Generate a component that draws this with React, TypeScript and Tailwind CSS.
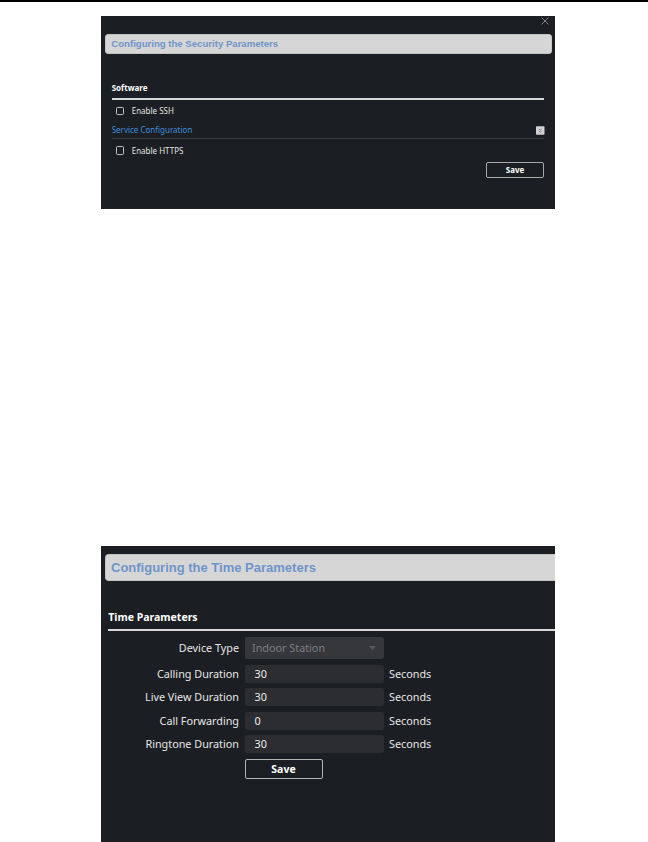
import React from "react";

const sans = { fontFamily: '"Noto Sans", "Open Sans", sans-serif' };

function CheckRow({ label }: { label: string }) {
  return (
    <div className="flex items-center h-[12px] pl-[4px] gap-[7.5px]">
      <span className="w-[8.5px] h-[8.5px] border border-[#c4c4c4] rounded-[1.5px] box-border" />
      <span className="text-[8px] leading-[12px] text-[#e4e4e4] font-['Noto_Sans',sans-serif]">{label}</span>
    </div>
  );
}

function SecurityPanel() {
  return (
    <div className="ml-[101px] mt-[14px] w-[454px] h-[193px] bg-[#1b1e22] flex flex-col">
      <div className="h-[18px] flex justify-end items-start pt-[1.3px] pr-[6.5px]">
        <svg width="8" height="8" viewBox="0 0 8 8">
          <path d="M0.5 0.5 L7.5 7.5 M7.5 0.5 L0.5 7.5" stroke="#8a8c90" strokeWidth="0.9" fill="none" />
        </svg>
      </div>
      <div className="ml-[4.3px] mr-[3.3px] h-[20px] rounded-[3px] bg-[#d6d6d6] border border-[#c4c4c4] flex items-center pl-[5px]">
        <span className="font-['Liberation_Sans',Arial,sans-serif] font-bold text-[9.6px] text-[#6f94c9] leading-none">
          Configuring the Security Parameters
        </span>
      </div>
      <div className="px-[10.7px] flex flex-col">
        <div className="mt-[29px] h-[10px] text-[8px] leading-[10px] font-bold text-white font-['Noto_Sans',sans-serif]">
          Software
        </div>
        <div className="mt-[5px] h-[1.5px] bg-[#d8d8d8]" />
        <div className="mt-[5.5px]">
          <CheckRow label="Enable SSH" />
        </div>
        <div className="mt-[7px] h-[12px] flex items-center justify-between">
          <span className="text-[8px] leading-[12px] text-[#3f8edc] font-['Noto_Sans',sans-serif]">Service Configuration</span>
          <svg width="8.5" height="9" viewBox="0 0 9 9" className="mr-[-0.5px]">
            <rect x="0" y="0" width="9" height="9" rx="0.8" fill="#d2d2d2" />
            <path d="M3 2.8 L4.5 4.1 L6 2.8 M3 5 L4.5 6.3 L6 5" stroke="#5a5a5a" strokeWidth="0.7" fill="none" />
          </svg>
        </div>
        <div className="mt-[2px] h-[1px] bg-[#3a3d42]" />
        <div className="mt-[5.5px]">
          <CheckRow label="Enable HTTPS" />
        </div>
        <div className="mt-[5.8px] flex justify-end">
          <div className="w-[58.5px] h-[15.5px] border border-[#a9a9a9] rounded-[2px] flex items-center justify-center">
            <span className="text-[8px] font-bold text-white leading-none font-['Noto_Sans',sans-serif]">Save</span>
          </div>
        </div>
      </div>
    </div>
  );
}

const rows = [
  { label: "Calling Duration", value: "30" },
  { label: "Live View Duration", value: "30" },
  { label: "Call Forwarding", value: "0" },
  { label: "Ringtone Duration", value: "30" },
];

function TimePanel() {
  return (
    <div className="ml-[101px] mt-[337px] w-[454px] h-[296px] bg-[#1b1e22] flex flex-col" style={sans}>
      <div className="mt-[8.3px] ml-[4px] h-[26.7px] rounded-l-[4px] bg-[#d6d6d6] border border-r-0 border-[#c4c4c4] flex items-center pl-[5px]">
        <span className="font-['Liberation_Sans',Arial,sans-serif] font-bold text-[13px] text-[#6f94c9] leading-none">
          Configuring the Time Parameters
        </span>
      </div>
      <div className="mt-[28.7px] ml-[7.3px] h-[14px] text-[10.5px] leading-[14px] font-bold text-white">
        Time Parameters
      </div>
      <div className="mt-[5.6px] ml-[7px] h-[1.5px] bg-[#d8d8d8]" />
      <div className="mt-[6.5px] grid grid-cols-[138px_139px_auto] gap-x-[5.5px] gap-y-[5.5px] items-center text-[10.8px] text-[#e6e6e6]">
        <div className="text-right leading-[22px]">Device Type</div>
        <div className="h-[22px] rounded-[2px] bg-[#35373b] flex items-center justify-between pl-[7.5px] pr-[8px]">
          <span className="text-[#7c7e82]">Indoor Station</span>
          <svg width="7" height="4" viewBox="0 0 7 4">
            <path d="M0 0 L7 0 L3.5 4 Z" fill="#55585c" />
          </svg>
        </div>
        <div />
        {rows.map((r) => (
          <React.Fragment key={r.label}>
            <div className="text-right leading-[18px]">{r.label}</div>
            <div className="h-[18px] rounded-[2px] bg-[#2b2d31] flex items-center pl-[10px]">
              <span className="text-[#ececec]">{r.value}</span>
            </div>
            <div className="leading-[18px]">Seconds</div>
          </React.Fragment>
        ))}
        <div />
        <div className="w-[78px] h-[20px] border border-[#b4b4b4] rounded-[2px] flex items-center justify-center">
          <span className="font-bold text-white text-[10.5px] leading-none">Save</span>
        </div>
        <div />
      </div>
    </div>
  );
}

export default function App() {
  return (
    <div className="w-[648px] h-[842px] bg-white overflow-hidden flex flex-col">
      <div className="h-[2px] bg-black shrink-0" />
      <SecurityPanel />
      <TimePanel />
    </div>
  );
}
